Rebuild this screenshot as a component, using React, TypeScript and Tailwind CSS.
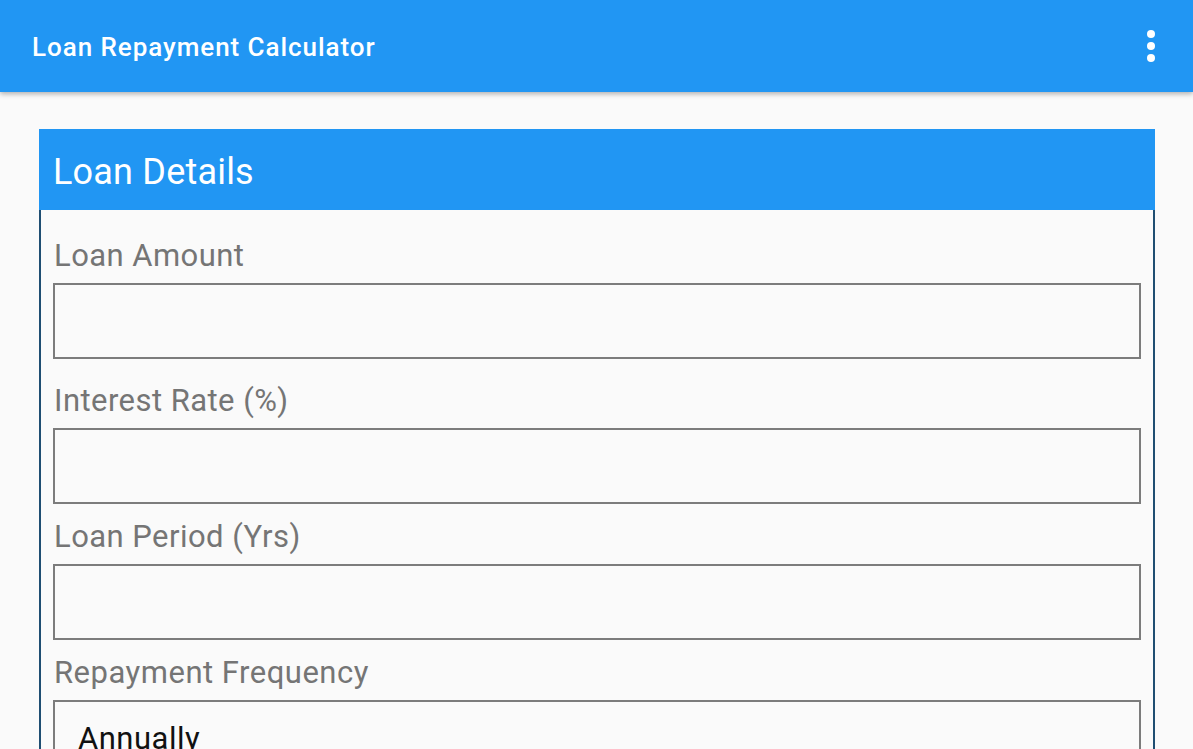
const fields = ["Loan Amount", "Interest Rate (%)", "Loan Period (Yrs)"];

const MoreIcon = () => (
  <svg width="12" height="36" viewBox="0 0 12 36" fill="white">
    <circle cx="6" cy="6" r="4" />
    <circle cx="6" cy="18" r="4" />
    <circle cx="6" cy="30" r="4" />
  </svg>
);

export default function App() {
  return (
    <div className="h-[749px] bg-[#fafafa] font-['Roboto',sans-serif] overflow-hidden">
      <header className="h-[92px] bg-[#2196f3] flex items-center justify-between pl-8 pr-[36px] shadow-[0_2px_5px_rgba(0,0,0,0.3)] relative">
        <h1 className="text-white text-[26px] font-medium tracking-[0.95px] pt-[2px]">Loan Repayment Calculator</h1>
        <MoreIcon />
      </header>

      <div className="ml-[39px] mt-[37px] w-[1116px]">
        <div className="bg-[#2196f3] h-[81px] flex items-center px-[14px]">
          <h2 className="text-white text-[36px] tracking-[0.2px] leading-none pt-[5px]">Loan Details</h2>
        </div>
        <div className="border-x-2 border-[#1f4e72] px-3 pt-[26px] pb-10">
          {fields.map((f, i) => (
            <div key={f} className={i === 0 ? "mb-[22px]" : "mb-[13px]"}>
              <label className="block text-[31px] leading-[36px] tracking-[0.45px] text-[#757575] pl-px pt-[2px] -mb-[2px]">{f}</label>
              <input
                type="text"
                className="mt-[11px] block w-full h-[76px] border-2 border-[#7c7c7c] bg-transparent outline-none"
              />
            </div>
          ))}
          <label className="block text-[31px] leading-[36px] tracking-[0.5px] text-[#757575] pl-px pt-[2px] -mb-[2px]">Repayment Frequency</label>
          <div className="mt-[11px] h-[76px] border-2 border-[#7c7c7c] pl-[23px] pt-[19px]">
            <span className="text-[31px] leading-[36px] tracking-[0.5px] text-[#111]">Annually</span>
          </div>
        </div>
      </div>
    </div>
  );
}
